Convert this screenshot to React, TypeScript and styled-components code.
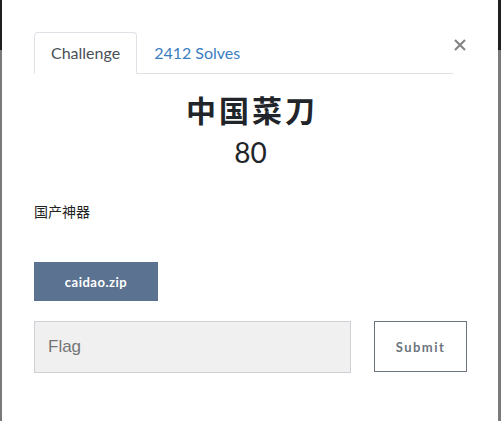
import React, { useState } from 'react';
import styled, { createGlobalStyle } from 'styled-components';

const GlobalStyle = createGlobalStyle`
  html, body {
    margin: 0;
    padding: 0;
  }
  body {
    background: linear-gradient(to bottom, #1f1f1f 0, #1f1f1f 50px, #7a7a7a 50px);
    font-family: Lato, "Noto Sans CJK SC", sans-serif;
    color: #212529;
  }
`;

const Modal = styled.div`
  margin: 0 3px 0 2px;
  min-height: 421px;
  box-sizing: border-box;
  background-color: #fff;
  padding: 32px 31px 0 32px;
`;

const Header = styled.div`
  display: flex;
  align-items: flex-start;
`;

const TabNav = styled.nav`
  flex: 1;
  display: flex;
  border-bottom: 1px solid #dee2e6;
`;

const Tab = styled.a<{ $active?: boolean }>`
  display: block;
  padding: 8px 16px;
  margin-bottom: -1px;
  font-size: 16px;
  line-height: 24px;
  text-decoration: none;
  cursor: pointer;
  border: 1px solid ${(p) => (p.$active ? '#dee2e6' : 'transparent')};
  border-bottom-color: ${(p) => (p.$active ? '#fff' : 'transparent')};
  border-radius: 4px 4px 0 0;
  color: ${(p) => (p.$active ? '#495057' : '#3a7ebf')};
  background-color: ${(p) => (p.$active ? '#fff' : 'transparent')};
`;

const CloseButton = styled.button`
  width: 14px;
  height: 14px;
  margin: 6px 0 0 0;
  padding: 0;
  border: none;
  background: none;
  cursor: pointer;
  display: flex;
  align-items: center;
  justify-content: center;
`;

const Title = styled.h2`
  margin: 19px 0 0 0;
  text-align: center;
  font-size: 30px;
  line-height: 34px;
  font-weight: 700;
  letter-spacing: 3px;
  padding-left: 3px;
  color: #212529;
`;

const Points = styled.h3`
  margin: 8px 0 0 0;
  text-align: center;
  font-size: 28px;
  line-height: 34px;
  font-weight: 400;
  color: #212529;
`;

const Description = styled.p`
  margin: 33px 0 0 0;
  font-size: 14px;
  line-height: 20px;
  color: #222;
`;

const FileButton = styled.a`
  display: flex;
  align-items: center;
  justify-content: center;
  width: 124px;
  height: 39px;
  margin-top: 40px;
  background-color: #5b7290;
  color: #fff;
  font-size: 13px;
  font-weight: 700;
  letter-spacing: 0.5px;
  text-decoration: none;
  cursor: pointer;
`;

const SubmitRow = styled.form`
  display: flex;
  align-items: flex-start;
  margin-top: 20px;
`;

const FlagInput = styled.input`
  flex: 1;
  height: 52px;
  box-sizing: border-box;
  margin-right: 23px;
  padding: 0 13px;
  background-color: #f0f0f0;
  border: 1px solid #cdd1d6;
  font-family: "Liberation Sans", Arial, sans-serif;
  font-size: 17px;
  color: #333;
  outline: none;

  &::placeholder {
    color: #757575;
  }
`;

const SubmitButton = styled.button`
  width: 93px;
  height: 51px;
  box-sizing: border-box;
  background-color: #fff;
  border: 1px solid #6c757d;
  font-family: Lato, sans-serif;
  font-size: 13px;
  font-weight: 700;
  letter-spacing: 1.5px;
  color: #6c757d;
  cursor: pointer;
`;

const App = () => {
  const [flag, setFlag] = useState('');

  return (
    <>
      <GlobalStyle />
      <Modal>
        <Header>
          <TabNav>
            <Tab $active>Challenge</Tab>
            <Tab>2412 Solves</Tab>
          </TabNav>
          <CloseButton aria-label="Close">
            <svg width="12" height="12" viewBox="0 0 12 12">
              <path d="M1 1L11 11M11 1L1 11" stroke="#858585" strokeWidth="2.2" />
            </svg>
          </CloseButton>
        </Header>

        <Title>中国菜刀</Title>
        <Points>80</Points>

        <Description>国产神器</Description>

        <FileButton>caidao.zip</FileButton>

        <SubmitRow onSubmit={(e) => e.preventDefault()}>
          <FlagInput
            type="text"
            placeholder="Flag"
            value={flag}
            onChange={(e) => setFlag(e.target.value)}
          />
          <SubmitButton type="submit">Submit</SubmitButton>
        </SubmitRow>
      </Modal>
    </>
  );
};

export default App;
